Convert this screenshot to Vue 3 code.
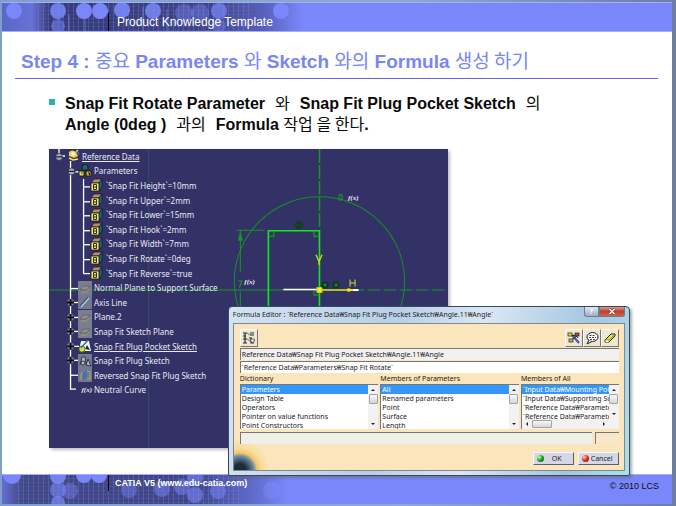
<script setup>
const params = [
  '`Snap Fit Height`=10mm',
  '`Snap Fit Upper`=2mm',
  '`Snap Fit Lower`=15mm',
  '`Snap Fit Hook`=2mm',
  '`Snap Fit Width`=7mm',
  '`Snap Fit Rotate`=0deg',
  '`Snap Fit Reverse`=true',
]
const tree = [
  { text: 'Reference Data', level: 'root', icon: 'set', link: true },
  { text: 'Parameters', level: 'child', icon: 'params' },
  ...params.map((text) => ({ text, level: 'leaf', icon: 'param' })),
  { text: 'Normal Plane to Support Surface', level: 'child', icon: 'plane' },
  { text: 'Axis Line', level: 'child', icon: 'line' },
  { text: 'Plane.2', level: 'child', icon: 'plane' },
  { text: 'Snap Fit Sketch Plane', level: 'child', icon: 'plane' },
  { text: 'Snap Fit Plug Pocket Sketch', level: 'child', icon: 'active', link: true },
  { text: 'Snap Fit Plug Sketch', level: 'child', icon: 'sketch' },
  { text: 'Reversed Snap Fit Plug Sketch', level: 'child', icon: 'mirror' },
  { text: 'Neutral Curve', level: 'child', icon: 'law' },
]
const lists = [
  {
    id: 'dictionary',
    title: 'Dictionary',
    items: ['Parameters', 'Design Table', 'Operators', 'Pointer on value functions', 'Point Constructors'],
    selected: 'Parameters',
  },
  {
    id: 'members',
    title: 'Members of Parameters',
    items: ['All', 'Renamed parameters', 'Point', 'Surface', 'Length'],
    selected: 'All',
  },
  {
    id: 'all',
    title: 'Members of All',
    items: [
      '`Input Data₩Mounting Point`',
      '`Input Data₩Supporting Surface`',
      '`Reference Data₩Parameters₩Height`',
      '`Reference Data₩Parameters₩Upper`',
    ],
    selected: '',
    horizontal: true,
  },
]
const leafY = [38, 53, 67, 82, 96, 111, 125]
const childY = [140, 154, 169, 183, 198, 212, 227]
const expanders = [154, 169, 183, 198, 212]
</script>

<template>
  <div class="slide">
    <header class="banner top">
      <svg class="art" width="300" height="29" viewBox="0 0 300 29" aria-hidden="true">
        <defs>
          <linearGradient id="fadeTop">
            <stop offset="0" stop-color="#5c66c4" />
            <stop offset="0.1" stop-color="#6972d6" />
            <stop offset="0.16" stop-color="#343a72" />
            <stop offset="0.7" stop-color="#3f4585" />
            <stop offset="0.88" stop-color="#5962bd" />
            <stop offset="1" stop-color="#7a87fa" />
          </linearGradient>
          <pattern id="grid" width="5" height="4" patternUnits="userSpaceOnUse">
            <path d="M1.5 0V4" stroke="#7a87fa" stroke-opacity=".3" />
            <path d="M0 3.5H5" stroke="#8f9aff" stroke-opacity=".12" />
          </pattern>
        </defs>
        <rect width="300" height="29" fill="url(#fadeTop)" />
        <rect x="35" width="215" height="29" fill="url(#grid)" />
        <path d="M67 12V29M83 8V29M141 4V29M165 6V29" stroke="#949dff" stroke-opacity=".55" />
        <g fill="#7a87fa">
          <circle cx="12" cy="8" r="8" />
          <circle cx="56" cy="8" r="8" opacity=".85" />
          <circle cx="56" cy="23" r="7" opacity=".55" />
          <circle cx="82" cy="8" r="8" />
          <circle cx="98" cy="8" r="8" />
          <circle cx="120" cy="7" r="8" opacity=".9" />
          <circle cx="151" cy="8" r="8" opacity=".85" />
          <circle cx="182" cy="10" r="9" opacity=".4" />
          <circle cx="198" cy="10" r="9" opacity=".4" />
          <circle cx="217" cy="8" r="8" opacity=".7" />
          <circle cx="217" cy="23" r="7" opacity=".4" />
          <circle cx="279" cy="8" r="8" />
        </g>
      </svg>
      <p class="course">Product Knowledge Template</p>
    </header>

    <main class="content">
      <h1 class="title">
        Step 4 : <span class="ko">중요</span> Parameters <span class="ko">와</span> Sketch
        <span class="ko">와의</span> Formula <span class="ko">생성 하기</span>
      </h1>
      <ul class="points">
        <li>
          <span class="line"><span>Snap Fit Rotate Parameter</span><span class="ko">와</span><span>Snap Fit Plug Pocket Sketch</span><span class="ko">의</span></span>
          <span class="line"><span>Angle (0deg )</span><span class="ko">과의</span><span>Formula <span class="ko">작업 을 한다</span>.</span></span>
        </li>
      </ul>

      <div class="stage">
        <section class="viewport" aria-label="CATIA">
          <svg class="drawing" viewBox="0 0 398 300" preserveAspectRatio="none" aria-hidden="true">
            <path d="M99.5 0V300" stroke="#354f66" />
            <path d="M0 141.5H270" stroke="#169524" />
            <path d="M270 141.5H398" stroke="#169524" stroke-dasharray="13 3" />
            <path d="M270 0V80" stroke="#169524" stroke-width="1.5" stroke-dasharray="14 2" />
            <circle cx="270" cy="133" r="85" fill="none" stroke="#168f26" />
            <path d="M219 175V82H270V175" fill="none" stroke="#10ea18" stroke-width="1.6" />
            <path d="M219 87.5H224.5V82M264.5 82V87.5H270M264.5 141V146.5H270" fill="none" stroke="#12b01c" />
            <path d="M187 81.5H215M191 82V123M191 143V175" fill="none" stroke="#169524" />
            <path d="M191 82L188.5 92H193.5Z" fill="#169524" />
            <path d="M248 73.5L245 76.5L248 79.5ZM251 73.5L254 76.5L251 79.5ZM249.5 72V81" fill="#0d5a1a" stroke="#0b3f14" />
            <path d="M234 141H270" stroke="#fff" stroke-width="1.5" />
            <path d="M270 141.5H303" stroke="#e2e51b" stroke-width="1.5" />
            <path d="M303 141.5H309" stroke="#fff" stroke-width="2" />
            <path d="M298 139.5L305 141.5L298 143.5Z" fill="#f2ef13" />
            <rect x="267.5" y="139" width="5" height="5" fill="#ffe91c" stroke="#b4d215" />
            <g fill="none" stroke="#0a3b16" stroke-width="1.4">
              <circle cx="275.5" cy="136.5" r="3" /><circle cx="286.5" cy="136.5" r="3" />
            </g>
            <g fill="#158c20"><circle cx="275.5" cy="136.5" r="1.3" /><circle cx="286.5" cy="136.5" r="1.3" /></g>
            <path d="M266.5 106L269.5 113L272.5 106M269.5 111V116" fill="none" stroke="#d4df1c" stroke-width="1.3" />
            <path d="M300.5 131V138M305.5 131V138M300.5 134.5H305.5" fill="none" stroke="#d4df1c" />
            <rect x="289.5" y="45.5" width="3" height="6" rx="1.5" fill="none" stroke="#17a424" />
            <path d="M189 132.5H192.5L190 139" fill="none" stroke="#17a424" />
            <g fill="none" stroke="#fff" stroke-width="1.3">
              <path d="M10 0V7H16M21.5 12V241H27M23 23H30M34.5 30V125" />
              <path v-for="y in leafY" :key="y" :d="`M34.5 ${y}H41`" />
              <path v-for="y in childY" :key="y" :d="`M21.5 ${y}H30`" />
            </g>
            <g fill="#a9abba" stroke="#222434" stroke-width=".7">
              <circle cx="10" cy="8" r="3.5" /><circle cx="22.5" cy="22.5" r="3.5" />
            </g>
            <path d="M6 8H13M19 22.5H26" stroke="#222434" stroke-width="1.3" />
            <g v-for="y in expanders" :key="y">
              <circle cx="21.5" :cy="y" r="3.5" fill="#777a90" />
              <path :d="`M18 ${y}H25M21.5 ${y - 3.5}V${y + 3.5}`" stroke="#0b0c14" stroke-width="1.8" />
            </g>
          </svg>
          <span class="fx arc">f(x)</span>
          <span class="fx dim">f(x)</span>
          <ul class="tree">
            <li v-for="node in tree" :key="node.text" :class="node.level">
              <svg v-if="node.icon === 'set'" class="icon" viewBox="0 0 14 14" aria-hidden="true">
                <path d="M3 3Q6 0 10 3L12 7L8 9L3 7Z" fill="#f3cf50" />
                <path d="M5 4L8 3L9 6L6 7Z" fill="#fff6c8" />
                <path d="M3 9L7 11L12 10M10 3L12 1" fill="none" stroke="#f7e27b" stroke-width="1.5" />
                <path d="M11 2L13 5" stroke="#2f8cc4" stroke-width="1.3" />
              </svg>
              <svg v-else-if="node.icon === 'params'" class="icon" viewBox="0 0 14 14" aria-hidden="true">
                <path d="M4 2L7 0L10 2V6H4Z" fill="#1c6a69" stroke="#0c1b2b" />
                <rect x="1" y="7" width="5" height="5" fill="#e8dd54" stroke="#17200f" />
                <rect x="8" y="7" width="5" height="5" fill="#e0a24a" stroke="#17200f" />
                <path d="M3 9H4.5M10 9H11.5V11" stroke="#1a1c10" fill="none" />
              </svg>
              <svg v-else-if="node.icon === 'param'" class="icon" viewBox="0 0 14 14" aria-hidden="true">
                <path d="M1 5L4 1H12L9 5Z" fill="#bb8a70" stroke="#171a2b" stroke-width=".8" />
                <path d="M9 5L12 1V9L9 13Z" fill="#167071" stroke="#171a2b" stroke-width=".8" />
                <rect x="1" y="5" width="8" height="8" fill="#eee66d" stroke="#171a2b" stroke-width=".8" />
                <path d="M3.5 6.5H6.5V11.5H3.5ZM3.5 9H6.5" fill="none" stroke="#322f14" />
              </svg>
              <svg v-else-if="node.icon === 'plane'" class="icon" viewBox="0 0 14 14" aria-hidden="true">
                <rect width="14" height="14" fill="#7b7e91" />
                <path d="M2 9L5 5H12L9 9Z" fill="#8f8f88" stroke="#5c5f64" stroke-width=".8" />
                <path d="M3 11H8L11 8" fill="none" stroke="#a59c62" />
              </svg>
              <svg v-else-if="node.icon === 'line'" class="icon" viewBox="0 0 14 14" aria-hidden="true">
                <rect width="14" height="14" fill="#74788e" />
                <path d="M3 12L11 3" stroke="#9fc8e9" stroke-width="1.5" />
                <path d="M2 11L10 2" stroke="#283d66" />
              </svg>
              <svg v-else-if="node.icon === 'active'" class="icon" viewBox="0 0 14 14" aria-hidden="true">
                <path d="M3 2H11L13 12H1Z" fill="#f7f8f3" />
                <path d="M7 10L9 6L12 11Z" fill="#1f2635" />
                <circle cx="4" cy="10" r="3" fill="#e2e12e" stroke="#4c8b29" />
                <path d="M3 9L10 1" stroke="#2a6eb5" stroke-width="1.5" />
              </svg>
              <svg v-else-if="node.icon === 'sketch'" class="icon" viewBox="0 0 14 14" aria-hidden="true">
                <rect width="14" height="14" fill="#74788e" />
                <path d="M2 11L4 3H7L8 11M8 11L10 5L13 12Z" fill="#b7bac6" stroke="#30344a" />
                <circle cx="5" cy="9" r="2" fill="none" stroke="#30344a" />
              </svg>
              <svg v-else-if="node.icon === 'mirror'" class="icon" viewBox="0 0 14 14" aria-hidden="true">
                <rect width="14" height="14" fill="#74788e" />
                <path d="M5 4L9 2V10L5 12Z" fill="#3778b0" />
                <path d="M3 12V6L5 4M9 3L12 4V11H9" fill="none" stroke="#b79f71" />
              </svg>
              <span v-else class="fx law" aria-hidden="true">f(x)</span>
              <span :class="{ link: node.link }">{{ node.text }}</span>
            </li>
          </ul>
        </section>

        <section class="dialog" role="dialog" aria-labelledby="dialog-title">
          <div class="titlebar">
            <h2 id="dialog-title">Formula Editor : `Reference Data₩Snap Fit Plug Pocket Sketch₩Angle.11₩Angle`</h2>
            <div class="caption">
              <button class="help" type="button" aria-label="Help">?</button>
              <button class="close" type="button" aria-label="Close">
                <svg width="8" height="7" viewBox="0 0 8 7"><path d="M1.5 1L6.5 6M6.5 1L1.5 6" stroke="#7d302b" stroke-width="2.6" /><path d="M1.5 1L6.5 6M6.5 1L1.5 6" stroke="#fff" stroke-width="1.5" /></svg>
              </button>
            </div>
          </div>
          <form class="body" @submit.prevent>
            <div class="toolbar">
              <button class="tool" type="button" aria-label="Incremental">
                <svg width="14" height="14" viewBox="0 0 14 14">
                  <path d="M1 2H5M1 5H4M3 2V12M1 8H5M1 12H5M8 2H12M8 4H12M7 7H10M9 7V12H12M11 9H13" fill="none" stroke="#2c2c24" stroke-width="1.2" />
                  <path d="M5 2L8 4M5 8L8 10" stroke="#747064" />
                  <rect x="9" y="8" width="3" height="3" fill="#fff" stroke="#444" stroke-width=".7" />
                </svg>
              </button>
              <span class="spacer"></span>
              <button class="tool" type="button" aria-label="Wizard">
                <svg width="14" height="14" viewBox="0 0 14 14">
                  <path d="M5 4L12 12" stroke="#4b55b8" stroke-width="2" />
                  <path d="M3 4L10 5L4 9M8 3L11 7" fill="none" stroke="#222" />
                  <rect x="1" y="2" width="4" height="3" fill="#e6d82d" stroke="#222" stroke-width=".7" />
                  <rect x="8" y="2" width="4" height="3" fill="#a34d3c" stroke="#222" stroke-width=".7" />
                  <rect x="2" y="8" width="4" height="3" fill="#d3b23f" stroke="#222" stroke-width=".7" />
                </svg>
              </button>
              <button class="tool" type="button" aria-label="Comment">
                <svg width="14" height="14" viewBox="0 0 14 14">
                  <ellipse cx="7.5" cy="6" rx="5.5" ry="4.5" fill="#f7f7f7" stroke="#1c1c1c" />
                  <path d="M4 9L2 13L7 10.5" fill="#f7f7f7" stroke="#1c1c1c" />
                  <path d="M4.5 4.5H10.5M4 6.5H11M5 8.5H10" stroke="#444" stroke-dasharray="2 1" />
                </svg>
              </button>
              <button class="tool" type="button" aria-label="Erase">
                <svg width="14" height="14" viewBox="0 0 14 14">
                  <path d="M2 9L8 3H12L12 5L6 11H2Z" fill="#e8e23b" stroke="#25250c" />
                  <path d="M2 9H6L12 3.5" fill="none" stroke="#8f891a" />
                  <path d="M2.5 9.5H5.5V11H2.5Z" fill="#fffee0" />
                </svg>
              </button>
            </div>
            <input class="field target" aria-label="Target" readonly value="Reference Data₩Snap Fit Plug Pocket Sketch₩Angle.11₩Angle" />
            <input class="field" aria-label="Formula" value="`Reference Data₩Parameters₩Snap Fit Rotate`" />
            <div class="lists">
              <div v-for="list in lists" :key="list.id" class="list">
                <label :for="list.id">{{ list.title }}</label>
                <div class="box">
                  <div class="pane">
                    <select :id="list.id" size="5">
                      <option v-for="item in list.items" :key="item" :selected="item === list.selected">{{ item }}</option>
                    </select>
                    <div v-if="list.horizontal" class="hbar" aria-hidden="true">
                      <i class="arrow left"></i><i class="thumb"></i><i class="arrow right"></i>
                    </div>
                  </div>
                  <div class="vbar" :class="{ short: list.horizontal }" aria-hidden="true">
                    <i class="arrow up"></i><i class="thumb"></i><i class="arrow down"></i>
                  </div>
                </div>
              </div>
            </div>
            <div class="status">
              <output class="message"></output>
              <output class="unit"></output>
            </div>
            <div class="actions">
              <button type="submit"><i class="dot green"></i><span>OK</span></button>
              <button type="button"><i class="dot red"></i><span>Cancel</span></button>
            </div>
          </form>
        </section>
      </div>
    </main>

    <footer class="banner bottom">
      <svg class="art" width="300" height="29" viewBox="0 0 300 29" aria-hidden="true">
        <defs>
          <linearGradient id="fadeBottom">
            <stop offset="0" stop-color="#666fd0" />
            <stop offset="0.07" stop-color="#414782" />
            <stop offset="0.65" stop-color="#3f4585" />
            <stop offset="0.83" stop-color="#5f69c8" />
            <stop offset="0.95" stop-color="#7a87fa" />
          </linearGradient>
        </defs>
        <rect width="300" height="29" fill="url(#fadeBottom)" />
        <rect x="15" width="225" height="29" fill="url(#grid)" />
        <g fill="#7a87fa">
          <circle cx="10" cy="0" r="9" />
          <circle cx="56" cy="1" r="8" opacity=".9" />
          <circle cx="56" cy="15" r="8" opacity=".6" />
          <circle cx="56" cy="28" r="7" opacity=".7" />
          <circle cx="68" cy="16" r="8" opacity=".4" />
          <circle cx="82" cy="0" r="8" />
          <circle cx="97" cy="0" r="8" />
          <circle cx="127" cy="15" r="8" opacity=".4" />
          <circle cx="160" cy="14" r="8" opacity=".5" />
          <circle cx="180" cy="12" r="8" opacity=".5" />
          <circle cx="193" cy="3" r="8" opacity=".6" />
          <circle cx="193" cy="20" r="8" opacity=".6" />
          <circle cx="216" cy="16" r="8" opacity=".5" />
          <circle cx="270" cy="15" r="9" opacity=".5" />
        </g>
      </svg>
      <p class="site">CATIA V5 (www.edu-catia.com)</p>
      <p class="copyright">© 2010 LCS</p>
    </footer>
  </div>
</template>

<style>
body {
  margin: 0;
  background: linear-gradient(90deg, #7e9fcd, #8fa9cc 60%, #6c7f9c);
}
</style>

<style scoped>
* {
  box-sizing: border-box;
}
p, h1, h2, ul {
  margin: 0;
  padding: 0;
  list-style: none;
}
.slide {
  min-height: 100vh;
  padding: 2px 4px 2px 2px;
  display: grid;
  grid-template-rows: auto 1fr auto;
  font-family: "Liberation Sans", "Noto Sans CJK KR", sans-serif;
}
.banner {
  position: relative;
  display: flex;
  height: 30px;
  padding-left: 106px;
  background: #7a87fa;
  overflow: hidden;
}
.top {
  align-items: flex-end;
  border-top: 1px solid #a3adfb;
  border-bottom: 1px solid #a3adfb;
}
.bottom {
  justify-content: space-between;
  border-top: 1px solid #a3adfb;
  padding-right: 13px;
}
.art {
  position: absolute;
  left: 0;
  top: 0;
}
.course {
  position: relative;
  padding-left: 8px;
  border-left: 1px solid #000;
  color: #fff;
  font-size: 12px;
  line-height: 18px;
}
.site {
  position: relative;
  height: 16px;
  padding-left: 6px;
  border-left: 1px solid #000;
  color: #fff;
  font-size: 9px;
  line-height: 16px;
  font-weight: 700;
}
.copyright {
  position: relative;
  color: #111;
  font-size: 9px;
  line-height: 22px;
}
.content {
  background: #fff;
  padding-top: 16px;
}
.title {
  height: 31px;
  margin: 0 14px 14px 13px;
  padding: 0 0 3px 6px;
  border-bottom: 1px solid #6b62f2;
  color: #7a86f6;
  font-size: 19px;
  line-height: 27px;
  white-space: nowrap;
}
.ko {
  font-family: "Noto Sans CJK KR", sans-serif;
  font-weight: 400;
  line-height: 1;
}
.points {
  padding-left: 47px;
  font-size: 16px;
  line-height: 21px;
  font-weight: 700;
  color: #0a0a0a;
}
.points li {
  display: grid;
  grid-template-columns: 6px 1fr;
  column-gap: 10px;
}
.points li::before {
  content: "";
  grid-row: 1 / 3;
  width: 6px;
  height: 6px;
  margin-top: 6px;
  background: #2fb0ae;
}
.line {
  grid-column: 2;
  display: flex;
  align-items: baseline;
  gap: 10px;
  height: 21px;
  white-space: nowrap;
}
.stage {
  position: relative;
  z-index: 1;
  margin: 14px 0 25px 47px;
}
.viewport {
  position: relative;
  width: 64%;
  aspect-ratio: 4 / 3;
  background: #333266;
  box-shadow: 2px 2px 3px #8888;
  overflow: hidden;
}
.drawing {
  position: absolute;
  width: 100%;
  height: 100%;
}
.tree {
  position: relative;
  height: 83%;
  display: grid;
  grid-auto-rows: minmax(0, 1fr);
  color: #e9e9f2;
  font: 8px "Noto Sans", sans-serif;
  white-space: nowrap;
}
.tree li {
  display: flex;
  align-items: center;
  gap: 2px;
}
.root {
  padding-left: 17px;
}
.child {
  padding-left: 29px;
}
.leaf {
  padding-left: 41px;
}
.icon, .law {
  flex: none;
  width: 14px;
  height: 14px;
}
.link {
  text-decoration: underline;
}
.fx {
  color: #f0f0f0;
  font: italic 700 7px/14px "Liberation Serif", serif;
}
.law {
  text-align: right;
}
.arc, .dim {
  position: absolute;
}
.arc {
  left: 75%;
  top: 14%;
}
.dim {
  left: 49%;
  top: 42%;
}
.dialog {
  position: absolute;
  left: 28.7%;
  top: 157px;
  width: 64.5%;
  padding: 0 4px 4px;
  border: 1px solid #37495c;
  border-radius: 4px 4px 2px 2px;
  background: linear-gradient(100deg, #d4e3f2, #b7cfe7 40%, #dbe7f4 60%, #a4c6e0 85%, #a9e1ee);
  box-shadow: 2px 2px 3px #6668;
  font: 7px/9px "Noto Sans", "Noto Sans CJK KR", sans-serif;
  color: #1c1c1c;
}
.titlebar {
  display: flex;
  justify-content: space-between;
  height: 16px;
}
.titlebar h2 {
  font-size: 7px;
  font-weight: 400;
  line-height: 15px;
  white-space: nowrap;
}
.caption {
  display: flex;
  height: 10px;
}
button {
  font: inherit;
  color: inherit;
  padding: 0;
}
.caption button {
  display: grid;
  place-items: center;
  border: 1px solid #6e7c8c;
  border-top: 0;
}
.caption .help {
  width: 15px;
  border-radius: 0 0 0 3px;
  background: linear-gradient(#dfe7ef, #9fb0c2);
  color: #fff;
  font-weight: 700;
}
.caption .close {
  width: 26px;
  border-radius: 0 0 3px 0;
  background: linear-gradient(#dd9a8d, #bf4030 50%, #d4604a);
}
.body {
  padding: 5px 5px 5px 6px;
  border: 1px solid #7f8790;
  background:
    radial-gradient(circle at 6px 100%, #1d2b38 0 6px, #6f8ea5 14px, #f3c56a 17px, #f9dd9e 22px, transparent 30px),
    #fae5bc;
}
.toolbar {
  display: flex;
  margin-bottom: 1px;
}
.spacer {
  flex: 1;
}
.tool {
  display: grid;
  place-items: center;
  width: 18px;
  height: 18px;
  border: 1px solid;
  border-color: #fffdf0 #7b7669 #7b7669 #fffdf0;
  background: #ece6d6;
}
.field {
  display: block;
  width: 100%;
  height: 12px;
  margin-bottom: 1px;
  padding: 0 1px;
  border: 0;
  border-top: 1px solid #777;
  border-left: 1px solid #777;
  background: #fff;
  color: #1c1c1c;
  font: inherit;
}
.target {
  background: #f0f0f0;
}
.lists {
  display: grid;
  grid-template-columns: 139fr 139fr 98fr;
  gap: 2px;
  margin-top: 1px;
}
.list {
  min-width: 0;
}
.list label {
  display: block;
  line-height: 10px;
}
.box {
  display: flex;
  height: 45px;
  border-top: 1px solid #777;
  border-left: 1px solid #777;
  background: #fff;
}
.pane {
  flex: 1;
  min-width: 0;
  overflow: hidden;
  display: flex;
  flex-direction: column;
}
select {
  flex: 1;
  display: block;
  width: 100%;
  min-height: 0;
  padding: 0;
  border: 0;
  border-radius: 0;
  outline: 0;
  overflow: hidden;
  background: #fff;
  color: #1c1c1c;
  font: inherit;
  scrollbar-width: none;
}
option {
  min-height: 9px;
  padding: 0 1px;
  font: inherit;
}
option:checked {
  background: linear-gradient(#3296fb, #3296fb);
  -webkit-text-fill-color: #fff;
}
.vbar, .hbar {
  display: flex;
  align-items: center;
  background: #f2f2f2;
}
.vbar {
  flex-direction: column;
  width: 10px;
  padding: 4px 0;
}
.short {
  padding-bottom: 14px;
}
.hbar {
  height: 10px;
  padding: 0 4px;
}
.thumb {
  border: 1px solid #a3a3a3;
  border-radius: 1px;
  background: linear-gradient(#fafafa, #d5d5d5);
}
.vbar .thumb {
  width: 9px;
  height: 10px;
  margin-top: 3px;
}
.hbar .thumb {
  width: 20px;
  height: 8px;
  margin-left: 4px;
}
.arrow {
  border: 2px solid transparent;
}
.up {
  border-top: 0;
  border-bottom-color: #222;
}
.down {
  margin-top: auto;
  border-bottom: 0;
  border-top-color: #222;
}
.left {
  border-left: 0;
  border-right-color: #222;
}
.right {
  margin-left: auto;
  border-right: 0;
  border-left-color: #222;
}
.status {
  display: flex;
  gap: 3px;
  margin-top: 3px;
}
.message, .unit {
  height: 12px;
  border-top: 1px solid #777;
  border-left: 1px solid #777;
  background: #efefec;
}
.message {
  flex: 1;
}
.unit {
  width: 24px;
  background: #f8e8c9;
}
.actions {
  display: flex;
  justify-content: flex-end;
  gap: 4px;
  margin-top: 8px;
}
.actions button {
  display: flex;
  align-items: center;
  width: 41px;
  height: 13px;
  padding: 0 3px;
  border: 1px solid;
  border-color: #f8f8ff #5c5c74 #5c5c74 #f8f8ff;
  background: #d6d7e6;
}
.actions span {
  flex: 1;
  text-align: center;
}
.dot {
  width: 7px;
  height: 7px;
  border-radius: 50%;
}
.green {
  background: radial-gradient(circle at 30% 30%, #c2ffb4, #1f9c20 50%, #0b4d10);
}
.red {
  background: radial-gradient(circle at 30% 30%, #ffd0b4, #d33118 50%, #6b120b);
}
</style>
